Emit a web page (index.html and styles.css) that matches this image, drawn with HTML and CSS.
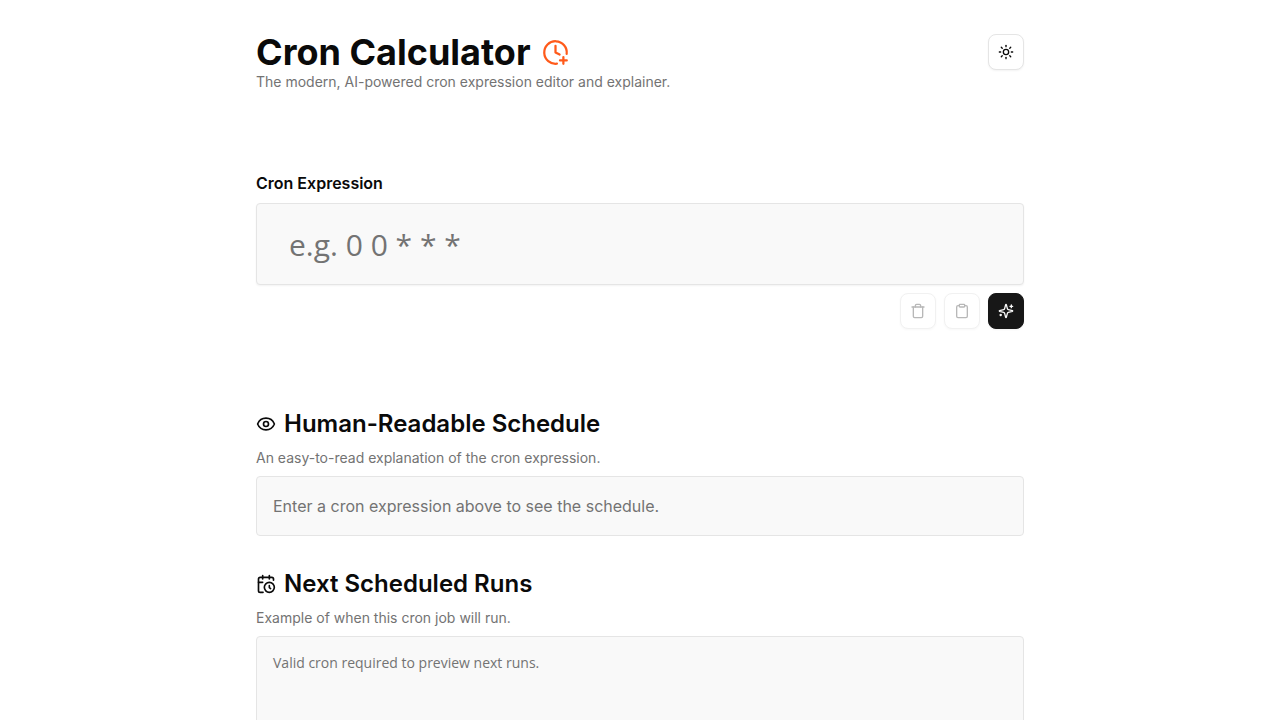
FILE: index.html
```html
<!DOCTYPE html>
<html lang="en">
<head>
    <meta charset="UTF-8">
    <meta name="viewport" content="width=device-width, initial-scale=1.0">
    <title>Cron Calculator</title>
    <link rel="stylesheet" href="styles.css">
</head>
<body>
    <div class="container">
        <header class="header">
            <div>
                <h1 class="title">
                    Cron Calculator
                    <svg class="icon logo" viewBox="0 0 24 24" aria-hidden="true">
                        <path d="M12 6v6l3.644 1.822"/>
                        <path d="M16 19h6"/>
                        <path d="M19 16v6"/>
                        <path d="M21.92 13.267a10 10 0 1 0-8.653 8.653"/>
                    </svg>
                </h1>
                <p class="tagline">The modern, AI-powered cron expression editor and explainer.</p>
            </div>
            <button type="button" class="btn btn-theme" aria-label="Toggle theme">
                <svg class="icon" viewBox="0 0 24 24" aria-hidden="true">
                    <circle cx="12" cy="12" r="4"/>
                    <path d="M12 2v2"/>
                    <path d="M12 20v2"/>
                    <path d="m4.93 4.93 1.41 1.41"/>
                    <path d="m17.66 17.66 1.41 1.41"/>
                    <path d="M2 12h2"/>
                    <path d="M20 12h2"/>
                    <path d="m6.34 17.66-1.41 1.41"/>
                    <path d="m19.07 4.93-1.41 1.41"/>
                </svg>
            </button>
        </header>

        <main>
            <div class="editor">
                <label class="label" for="cron">Cron Expression</label>
                <input class="cron-input" id="cron" type="text" placeholder="e.g. 0 0 * * *" autocomplete="off">
                <div class="actions">
                    <button type="button" class="btn" aria-label="Clear" disabled>
                        <svg class="icon" viewBox="0 0 24 24" aria-hidden="true">
                            <path d="M3 6h18"/>
                            <path d="M19 6v14a2 2 0 0 1-2 2H7a2 2 0 0 1-2-2V6"/>
                            <path d="M8 6V4a2 2 0 0 1 2-2h4a2 2 0 0 1 2 2v2"/>
                        </svg>
                    </button>
                    <button type="button" class="btn" aria-label="Copy" disabled>
                        <svg class="icon" viewBox="0 0 24 24" aria-hidden="true">
                            <rect width="8" height="4" x="8" y="2" rx="1" ry="1"/>
                            <path d="M16 4h2a2 2 0 0 1 2 2v14a2 2 0 0 1-2 2H6a2 2 0 0 1-2-2V6a2 2 0 0 1 2-2h2"/>
                        </svg>
                    </button>
                    <button type="button" class="btn btn-dark" aria-label="Generate with AI">
                        <svg class="icon" viewBox="0 0 24 24" aria-hidden="true">
                            <path d="M9.937 15.5A2 2 0 0 0 8.5 14.063l-6.135-1.582a.5.5 0 0 1 0-.962L8.5 9.936A2 2 0 0 0 9.937 8.5l1.582-6.135a.5.5 0 0 1 .963 0L14.063 8.5A2 2 0 0 0 15.5 9.937l6.135 1.581a.5.5 0 0 1 0 .964L15.5 14.063a2 2 0 0 0-1.437 1.437l-1.582 6.135a.5.5 0 0 1-.963 0z"/>
                            <path d="M20 3v4"/>
                            <path d="M22 5h-4"/>
                            <path d="M4 17v2"/>
                            <path d="M5 18H3"/>
                        </svg>
                    </button>
                </div>
            </div>

            <section class="section">
                <h2 class="heading">
                    <svg class="icon" viewBox="0 0 24 24" aria-hidden="true">
                        <path d="M2.062 12.348a1 1 0 0 1 0-.696 10.75 10.75 0 0 1 19.876 0 1 1 0 0 1 0 .696 10.75 10.75 0 0 1-19.876 0"/>
                        <circle cx="12" cy="12" r="3"/>
                    </svg>
                    Human-Readable Schedule
                </h2>
                <p class="hint">An easy-to-read explanation of the cron expression.</p>
                <div class="panel">Enter a cron expression above to see the schedule.</div>
            </section>

            <section class="section">
                <h2 class="heading">
                    <svg class="icon" viewBox="0 0 24 24" aria-hidden="true">
                        <path d="M21 7.5V6a2 2 0 0 0-2-2H5a2 2 0 0 0-2 2v14a2 2 0 0 0 2 2h3.5"/>
                        <path d="M16 2v4"/>
                        <path d="M8 2v4"/>
                        <path d="M3 10h5"/>
                        <path d="M17.5 17.5 16 16.3V14"/>
                        <circle cx="16" cy="16" r="6"/>
                    </svg>
                    Next Scheduled Runs
                </h2>
                <p class="hint">Example of when this cron job will run.</p>
                <div class="panel panel-runs">Valid cron required to preview next runs.</div>
            </section>
        </main>
    </div>
</body>
</html>
```
FILE: styles.css
```css
* {
    box-sizing: border-box;
}
body {
    background-color: #ffffff;
    color: #0a0a0a;
    font-family: Inter, sans-serif;
    font-size: 16px;
    line-height: 24px;
    margin: 0;
}
h1, h2, p {
    margin: 0;
}
.container {
    max-width: 800px;
    margin: 0 auto;
    padding: 32px 16px;
}
.icon {
    width: 16px;
    height: 16px;
    flex-shrink: 0;
    fill: none;
    stroke: currentColor;
    stroke-width: 2;
    stroke-linecap: round;
    stroke-linejoin: round;
}
.header {
    display: flex;
    justify-content: space-between;
    align-items: flex-start;
    margin-bottom: 79px;
}
.title {
    display: flex;
    align-items: center;
    gap: 11px;
    font-size: 36px;
    line-height: 40px;
    font-weight: 700;
}
.logo {
    width: 27px;
    height: 27px;
    color: #ff5a1a;
}
.tagline {
    font-size: 14px;
    line-height: 20px;
    color: #737373;
}
.btn {
    display: flex;
    align-items: center;
    justify-content: center;
    width: 36px;
    height: 36px;
    padding: 0;
    color: #0a0a0a;
    background-color: #ffffff;
    border: 1px solid #e5e5e5;
    border-radius: 8px;
    box-shadow: 0 1px 2px rgba(0, 0, 0, 0.05);
}
.btn:disabled {
    color: #737373;
    opacity: 0.5;
}
.btn-theme {
    margin-top: 2px;
}
.btn-dark {
    color: #fafafa;
    background-color: #171717;
    border-color: #171717;
}
.editor {
    display: flex;
    flex-direction: column;
    margin-bottom: 79px;
}
.label {
    font-weight: 600;
    margin-bottom: 8px;
}
.cron-input {
    width: 100%;
    height: 82px;
    padding: 0 32px;
    color: #0a0a0a;
    font-family: "Open Sans", sans-serif;
    font-size: 30px;
    background-color: #f9f9f9;
    border: 1px solid #e5e5e5;
    border-radius: 4px;
    box-shadow: 0 1px 2px rgba(0, 0, 0, 0.05);
}
.cron-input::placeholder {
    color: #737373;
}
.actions {
    display: flex;
    justify-content: flex-end;
    gap: 8px;
    margin-top: 8px;
}
.section {
    margin-bottom: 32px;
}
.heading {
    display: flex;
    align-items: center;
    gap: 8px;
    font-size: 24px;
    line-height: 32px;
    font-weight: 600;
}
.heading .icon {
    width: 20px;
    height: 20px;
}
.hint {
    margin: 8px 0;
    font-size: 14px;
    line-height: 20px;
    color: #737373;
}
.panel {
    padding: 16px;
    line-height: 26px;
    color: #737373;
    background-color: #f9f9f9;
    border: 1px solid #e5e5e5;
    border-radius: 4px;
}
.panel-runs {
    min-height: 180px;
    font-family: "Open Sans", sans-serif;
    font-size: 14px;
    line-height: 20px;
}
```
